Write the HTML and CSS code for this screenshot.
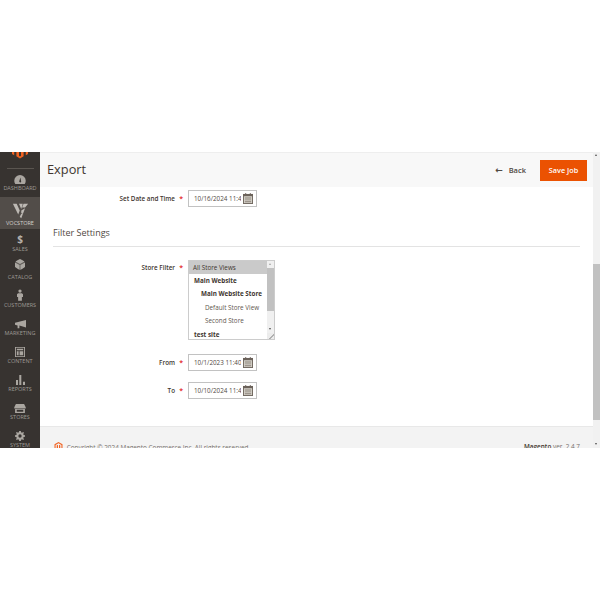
FILE: index.html
```html
<!DOCTYPE html>
<html lang="en">
<head>
    <meta charset="UTF-8">
    <meta name="viewport" content="width=device-width, initial-scale=1.0">
    <title>Export</title>
    <link rel="stylesheet" href="styles.css">
</head>
<body>
    <div class="app">
        <!-- Left menu -->
        <nav class="menu">
            <div class="logo">
                <svg width="16" height="20" viewBox="0 0 16 20"><path d="M8 0L0 4.600V14l2.200 1.300V5.900L8 2.600l5.800 3.300v9.400L16 14V4.600zM7 5.500L4.400 7v9.200L8 18.400l3.600-2.200V7L9 5.500v10.300L8 16.400l-1-.6z" fill="#f26322"/></svg>
            </div>
            <div class="menu-line"></div>
            <a class="menu-item first">
                <svg width="12" height="9" viewBox="0 0 14 11"><path d="M7 0a7 7 0 0 0-7 7c0 1.500.4 2.900 1.200 4h11.600A7 7 0 0 0 14 7a7 7 0 0 0-7-7zM6 8l1.500-5 1 5.200a1.300 1.300 0 0 1-2.500-.2z" fill="#aaa6a0" fill-rule="evenodd"/></svg>
                <span>Dashboard</span>
            </a>
            <a class="menu-item store">
                <svg width="17" height="16" viewBox="0 0 22 21"><path d="M1 1h5l4 9-2 5zM9 1l3 7 2-7zM15 1h6l-4 5h-4zM12 10l5-3-5 13-2-2 2-4 2-1-2 0z" fill="#bdb9b4"/></svg>
                <span>VocStore</span>
            </a>
            <a class="menu-item sales">
                <b class="dollar">$</b>
                <span>Sales</span>
            </a>
            <a class="menu-item raised">
                <svg width="10" height="11" viewBox="0 0 12 13"><path d="M6 0L.5 3 6 6l5.500-3zM0 4v5.500L5.500 13V7zM12 4L6.500 7v6L12 9.500z" fill="#aaa6a0"/><circle cx="6" cy="6.500" r="6" fill="#aaa6a0" opacity=".35"/></svg>
                <span>Catalog</span>
            </a>
            <a class="menu-item">
                <svg width="6" height="12" viewBox="0 0 8 15"><circle cx="4" cy="2.200" r="2.200" fill="#aaa6a0"/><path d="M1.500 5h5L8 6.500V10H6.500v5h-5v-5H0V6.500z" fill="#aaa6a0"/></svg>
                <span>Customers</span>
            </a>
            <a class="menu-item">
                <svg width="11" height="9" viewBox="0 0 15 12"><path d="M15 0v10L6 7.500V11H3.500V7.200L0 6.500V3.500z" fill="#aaa6a0"/></svg>
                <span>Marketing</span>
            </a>
            <a class="menu-item">
                <svg width="10" height="10" viewBox="0 0 11 12" preserveAspectRatio="none"><path d="M0 0h11v12H0zM1 1v10h9V1zM2 2h7v2H2zM2 5h2v5H2zM5 5h4v5H5z" fill="#aaa6a0" fill-rule="evenodd"/></svg>
                <span>Content</span>
            </a>
            <a class="menu-item">
                <svg width="9" height="10" viewBox="0 0 11 12"><path d="M0 6h2.500v6H0zM4 0h2.500v12H4zM8.500 8H11v4H8.500z" fill="#aaa6a0"/></svg>
                <span>Reports</span>
            </a>
            <a class="menu-item">
                <svg width="12" height="9" viewBox="0 0 14 11"><path d="M2 0h10l2 4v1.500H0V4zM1 6h12v5H1zM3 7v2.500h8V7z" fill="#aaa6a0" fill-rule="evenodd"/></svg>
                <span>Stores</span>
            </a>
            <a class="menu-item">
                <svg width="10" height="10" viewBox="0 0 12 12"><path d="M5 0h2l.3 1.600 1.100.5L9.800 1.200l1 1-.9 1.400.5 1.100L12 5v2l-1.600.3-.5 1.100.9 1.400-1 1-1.400-.9-1.100.5L7 12H5l-.3-1.600-1.100-.5-1.400.9-1-1 .9-1.400-.5-1.100L0 7V5l1.600-.3.5-1.100-.9-1.400 1-1 1.400.9 1.100-.5zM6 4a2 2 0 1 0 0 4 2 2 0 0 0 0-4z" fill="#aaa6a0" fill-rule="evenodd"/></svg>
                <span>System</span>
            </a>
        </nav>

        <div class="main">
            <header class="page-head">
                <h1>Export</h1>
                <div class="actions">
                    <a class="back"><span class="arrow">&#8592;</span>Back</a>
                    <button type="button" class="save">Save Job</button>
                </div>
            </header>

            <div class="content">
                <div class="field first-field">
                    <label>Set Date and Time</label>
                    <div class="date-box">
                        <input type="text" value="10/16/2024 11:47 AM">
                        <svg class="cal" width="10" height="11" viewBox="0 0 11 12"><path d="M0 1h11v11H0z" fill="#6b625a"/><path d="M2.500 0h1v2h-1zM7.500 0h1v2h-1z" fill="#6b625a"/><path d="M1 3.500h9V11H1z" fill="#d6d2ca"/><path d="M2 5h7v1H2zM2 7h7v1H2zM2 9h7v1H2z" fill="#8a8178"/></svg>
                    </div>
                </div>

                <h2 class="section">Filter Settings</h2>

                <div class="field top">
                    <label>Store Filter</label>
                    <div class="store-list">
                        <div class="options">
                            <div class="opt selected">All Store Views</div>
                            <div class="opt lvl1">Main Website</div>
                            <div class="opt lvl2">Main Website Store</div>
                            <div class="opt lvl3">Default Store View</div>
                            <div class="opt lvl4">Second Store</div>
                            <div class="opt lvl1 last">test site</div>
                        </div>
                        <div class="bar">
                            <span class="bar-up"></span>
                            <span class="bar-thumb"></span>
                            <span class="bar-down"></span>
                            <span class="bar-grip"></span>
                        </div>
                    </div>
                </div>

                <div class="field from-field">
                    <label>From</label>
                    <div class="date-box">
                        <input type="text" value="10/1/2023 11:40 AM">
                        <svg class="cal" width="10" height="11" viewBox="0 0 11 12"><path d="M0 1h11v11H0z" fill="#6b625a"/><path d="M2.500 0h1v2h-1zM7.500 0h1v2h-1z" fill="#6b625a"/><path d="M1 3.500h9V11H1z" fill="#d6d2ca"/><path d="M2 5h7v1H2zM2 7h7v1H2zM2 9h7v1H2z" fill="#8a8178"/></svg>
                    </div>
                </div>

                <div class="field to-field">
                    <label>To</label>
                    <div class="date-box">
                        <input type="text" value="10/10/2024 11:47 AM">
                        <svg class="cal" width="10" height="11" viewBox="0 0 11 12"><path d="M0 1h11v11H0z" fill="#6b625a"/><path d="M2.500 0h1v2h-1zM7.500 0h1v2h-1z" fill="#6b625a"/><path d="M1 3.500h9V11H1z" fill="#d6d2ca"/><path d="M2 5h7v1H2zM2 7h7v1H2zM2 9h7v1H2z" fill="#8a8178"/></svg>
                    </div>
                </div>
            </div>

            <footer class="foot">
                <div class="copy">
                    <svg width="9" height="10" viewBox="0 0 16 20"><path d="M8 0L0 4.600V14l2.200 1.300V5.900L8 2.600l5.800 3.300v9.400L16 14V4.600zM7 5.500L4.400 7v9.200L8 18.400l3.600-2.200V7L9 5.500v10.300L8 16.400l-1-.6z" fill="#f26322"/></svg>
                    Copyright &copy; 2024 Magento Commerce Inc. All rights reserved.
                </div>
                <div class="ver"><b>Magento</b> ver. 2.4.7</div>
            </footer>
        </div>

        <!-- Page scrollbar -->
        <div class="page-bar">
            <span class="page-up"></span>
            <span class="page-thumb"></span>
            <span class="page-down"></span>
        </div>
    </div>
</body>
</html>
```

FILE: styles.css
```css
body {
    margin: 0;
    height: 600px;
    overflow: hidden;
    background-color: white;
    font-family: "Open Sans", sans-serif;
    color: #41362f;
}
.app {
    display: flex;
    height: 296px;
    margin-top: 152px;
    overflow: hidden;
}

/* Left menu */
.menu {
    width: 40px;
    flex: none;
    background-color: #373330;
    display: flex;
    flex-direction: column;
    align-items: center;
}
.logo {
    height: 19px;
    margin-top: -12px;
    flex: none;
}
.menu-line {
    width: 27px;
    height: 1px;
    flex: none;
    margin-top: 9px;
    background-color: #5a5550;
}
.menu-item {
    width: 40px;
    height: 28px;
    flex: none;
    display: flex;
    flex-direction: column;
    align-items: center;
    justify-content: flex-end;
    gap: 1px;
    color: #9e9a95;
    font-size: 5.500px;
    line-height: 7px;
    text-transform: uppercase;
}
.menu-item.first {
    height: 23px;
    margin-bottom: 5px;
}
.menu-item.store {
    height: 32px;
    padding-bottom: 2px;
    box-sizing: border-box;
    background-color: #524d49;
    color: #d5d2ce;
}
.menu-item.sales {
    height: 24px;
}
.menu-item.raised svg {
    margin-bottom: 3px;
}
.dollar {
    font-size: 10px;
    line-height: 12px;
    color: #b5b1ab;
}

/* Main column */
.main {
    flex: 1;
    min-width: 0;
    display: flex;
    flex-direction: column;
}
.page-head {
    height: 35px;
    flex: none;
    box-sizing: border-box;
    padding: 0 6px 0 7px;
    background-color: #f8f8f8;
    border-top: 1px solid #eeeeee;
    display: flex;
    align-items: center;
    justify-content: space-between;
}
.page-head h1 {
    margin: 0 0 3px;
    font-size: 12.800px;
    font-weight: 400;
    color: #41362f;
}
.actions {
    display: flex;
    align-items: center;
    gap: 14px;
}
.back {
    font-size: 7.500px;
    font-weight: 600;
    color: #514943;
}
.arrow {
    margin-right: 6px;
    font-size: 9px;
    font-family: "DejaVu Sans", sans-serif;
}
.save {
    width: 47px;
    height: 21px;
    padding: 0;
    border: 1px solid #eb5202;
    background-color: #eb5202;
    color: white;
    font-family: inherit;
    font-size: 7.300px;
    font-weight: 600;
}
.content {
    flex: none;
    height: 239px;
    box-sizing: border-box;
    padding: 3px 13px 0;
}
.field {
    display: flex;
    align-items: center;
    height: 17px;
}
.field.top {
    align-items: flex-start;
    height: auto;
}
.field label {
    width: 122px;
    flex: none;
    box-sizing: border-box;
    margin-right: 13px;
    text-align: right;
    font-size: 6.300px;
    font-weight: 600;
    color: #41362f;
    position: relative;
}
.field.top label {
    margin-top: 3px;
}
.field label::after {
    content: "*";
    position: absolute;
    right: -8px;
    top: 0;
    color: #e22626;
    font-size: 7px;
}
.date-box {
    position: relative;
    width: 69px;
    height: 17px;
}
.date-box input {
    display: block;
    width: 100%;
    height: 100%;
    box-sizing: border-box;
    margin: 0;
    padding: 0 15px 0 5px;
    border: 1px solid #c2c2c2;
    background-color: white;
    font-family: inherit;
    font-size: 6.300px;
    color: #514943;
}
.cal {
    position: absolute;
    right: 4px;
    top: 3px;
}
.section {
    margin: 20px 0 13px;
    padding-bottom: 7px;
    border-bottom: 1px solid #e3e3e3;
    font-size: 9px;
    line-height: 12px;
    font-weight: 400;
    color: #514943;
}

/* Store list */
.store-list {
    display: flex;
    width: 87px;
    height: 80px;
    box-sizing: border-box;
    border: 1px solid #cccccc;
}
.options {
    flex: 1;
    min-width: 0;
    font-size: 6.300px;
    line-height: 13.400px;
    color: #41362f;
}
.opt {
    white-space: nowrap;
    padding-left: 4px;
}
.opt.selected {
    background-color: #cacaca;
    line-height: 13px;
}
.opt.lvl1 {
    padding-left: 5px;
    font-weight: 700;
}
.opt.lvl2 {
    padding-left: 12px;
    font-weight: 700;
}
.opt.lvl3, .opt.lvl4 {
    padding-left: 16px;
    color: #5f5750;
}
.bar {
    width: 7px;
    flex: none;
    display: flex;
    flex-direction: column;
    align-items: stretch;
    background-color: #f0f0f0;
}
.bar-up, .bar-down {
    height: 7px;
    flex: none;
    position: relative;
}
.bar-up::after, .bar-down::after {
    content: "";
    position: absolute;
    left: 2px;
    top: 2px;
    border-left: 1.500px solid transparent;
    border-right: 1.500px solid transparent;
}
.bar-up::after {
    border-bottom: 2px solid #a3a3a3;
}
.bar-down::after {
    border-top: 2px solid #505050;
}
.bar-thumb {
    height: 43px;
    background-color: #c1c1c1;
}
.bar-down {
    margin-top: 15px;
}
.bar-grip {
    flex: 1;
    background: linear-gradient(135deg, #ececec 60%, #b0b0b0 60%, #b0b0b0 70%, #ececec 70%);
}
.from-field {
    margin-top: 14px;
}
.to-field {
    margin-top: 11px;
}

/* Footer */
.foot {
    flex: 1;
    box-sizing: border-box;
    padding: 15px 13px 0 14px;
    background-color: #f3f3f3;
    border-top: 1px solid #e8e8e8;
    display: flex;
    justify-content: space-between;
    font-size: 6.400px;
    line-height: 10px;
    color: #77716c;
}
.copy svg {
    vertical-align: -2px;
    margin-right: 2px;
}
.ver b {
    font-weight: 600;
    color: #41362f;
}

/* Page scrollbar */
.page-bar {
    width: 7px;
    flex: none;
    display: flex;
    flex-direction: column;
    background-color: #f1f1f1;
}
.page-up, .page-down {
    height: 7px;
    flex: none;
    position: relative;
}
.page-up::after, .page-down::after {
    content: "";
    position: absolute;
    left: 2px;
    top: 2px;
    border-left: 1.500px solid transparent;
    border-right: 1.500px solid transparent;
}
.page-up::after {
    border-bottom: 2px solid #505050;
}
.page-down::after {
    border-top: 2px solid #505050;
}
.page-thumb {
    height: 156px;
    margin-top: 105px;
    background-color: #c1c1c1;
}
.page-down {
    margin-top: auto;
}
```
